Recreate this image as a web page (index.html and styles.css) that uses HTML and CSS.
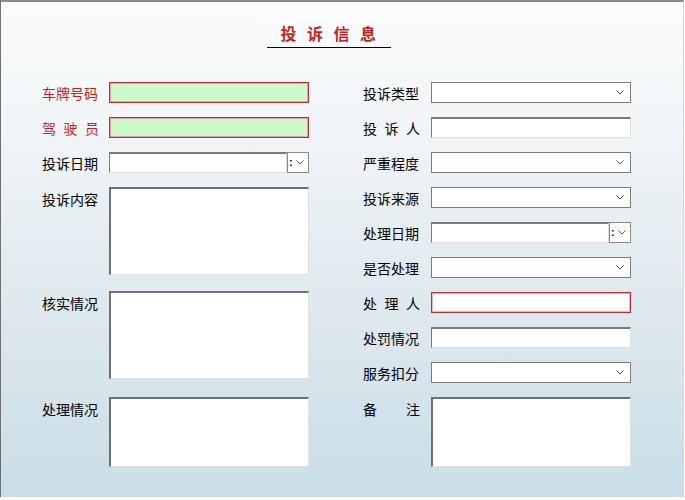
FILE: index.html
```html
<!DOCTYPE html>
<html lang="zh-CN">
<head>
<meta charset="utf-8">
<title>投诉信息</title>
<link rel="stylesheet" href="styles.css">
</head>
<body>
<div class="frame">
  <header class="head">
    <h1 class="title">投诉信息</h1>
  </header>
  <div class="form">
    <div class="col">
      <div class="row">
        <span class="lbl req">车牌号码</span>
        <div class="field req-field"></div>
      </div>
      <div class="row">
        <span class="lbl req just">驾 驶 员</span>
        <div class="field req-field"></div>
      </div>
      <div class="row">
        <span class="lbl">投诉日期</span>
        <div class="date">
          <div class="field sunken date-in"></div>
          <div class="date-btn"><span class="colon">:</span><svg class="chev" viewBox="0 0 8 5" width="8" height="5"><path d="M0.5 0.5 L4 4 L7.5 0.5" fill="none" stroke="#555" stroke-width="1"/></svg></div>
        </div>
      </div>
      <div class="row tall-1">
        <span class="lbl">投诉内容</span>
        <div class="area h88"></div>
      </div>
      <div class="row tall-2">
        <span class="lbl">核实情况</span>
        <div class="area h88"></div>
      </div>
      <div class="row tall-3">
        <span class="lbl">处理情况</span>
        <div class="area h70"></div>
      </div>
    </div>
    <div class="col col-right">
      <div class="row">
        <span class="lbl">投诉类型</span>
        <div class="field select"><svg class="chev" viewBox="0 0 8 5" width="8" height="5"><path d="M0.5 0.5 L4 4 L7.5 0.5" fill="none" stroke="#555" stroke-width="1"/></svg></div>
      </div>
      <div class="row">
        <span class="lbl just">投 诉 人</span>
        <div class="field sunken"></div>
      </div>
      <div class="row">
        <span class="lbl">严重程度</span>
        <div class="field select"><svg class="chev" viewBox="0 0 8 5" width="8" height="5"><path d="M0.5 0.5 L4 4 L7.5 0.5" fill="none" stroke="#555" stroke-width="1"/></svg></div>
      </div>
      <div class="row">
        <span class="lbl">投诉来源</span>
        <div class="field select"><svg class="chev" viewBox="0 0 8 5" width="8" height="5"><path d="M0.5 0.5 L4 4 L7.5 0.5" fill="none" stroke="#555" stroke-width="1"/></svg></div>
      </div>
      <div class="row">
        <span class="lbl">处理日期</span>
        <div class="date">
          <div class="field sunken date-in"></div>
          <div class="date-btn"><span class="colon">:</span><svg class="chev" viewBox="0 0 8 5" width="8" height="5"><path d="M0.5 0.5 L4 4 L7.5 0.5" fill="none" stroke="#555" stroke-width="1"/></svg></div>
        </div>
      </div>
      <div class="row">
        <span class="lbl">是否处理</span>
        <div class="field select"><svg class="chev" viewBox="0 0 8 5" width="8" height="5"><path d="M0.5 0.5 L4 4 L7.5 0.5" fill="none" stroke="#555" stroke-width="1"/></svg></div>
      </div>
      <div class="row">
        <span class="lbl just">处 理 人</span>
        <div class="field red-field"></div>
      </div>
      <div class="row">
        <span class="lbl">处罚情况</span>
        <div class="field sunken"></div>
      </div>
      <div class="row">
        <span class="lbl">服务扣分</span>
        <div class="field select"><svg class="chev" viewBox="0 0 8 5" width="8" height="5"><path d="M0.5 0.5 L4 4 L7.5 0.5" fill="none" stroke="#555" stroke-width="1"/></svg></div>
      </div>
      <div class="row tall-3">
        <span class="lbl just">备 注</span>
        <div class="area h70"></div>
      </div>
    </div>
  </div>
</div>
</body>
</html>
```

FILE: styles.css
```css
html, body {
  margin: 0;
  padding: 0;
  background: #ffffff;
}
body {
  font-family: "Noto Sans CJK SC", "Liberation Sans", sans-serif;
  font-size: 14px;
  color: #000;
}
.frame {
  box-sizing: border-box;
  width: 684px;
  height: 497px;
  border-top: 2px solid #8a8a8a;
  border-left: 1px solid #707070;
  border-right: 1px solid #d4d9dc;
  background: linear-gradient(to bottom, #fbfcfc 0%, #f1f5f7 25%, #e1ebf0 55%, #cadde6 100%);
}
.head {
  display: flex;
  justify-content: center;
  padding-top: 20px;
  padding-right: 27px;
}
.title {
  margin: 0;
  width: 124px;
  box-sizing: border-box;
  padding-left: 10px;
  font-size: 16px;
  font-weight: bold;
  color: #c81e1e;
  letter-spacing: 10.5px;
  line-height: 22px;
  text-align: center;
  border-bottom: 1px solid #000;
  padding-bottom: 3px;
}
.form {
  display: grid;
  grid-template-columns: 267px 300px;
  column-gap: 54px;
  padding-left: 41px;
  padding-top: 34px;
}
.col {
  display: flex;
  flex-direction: column;
  gap: 14px;
}
.row {
  display: flex;
  align-items: center;
  height: 21px;
  gap: 10px;
}
.col-right .row { gap: 11px; }
.row.tall-1 { height: 90px; align-items: flex-start; }
.row.tall-2 { height: 92px; align-items: flex-start; }
.row.tall-3 { height: 70px; align-items: flex-start; }
.row.tall-1 .lbl, .row.tall-2 .lbl, .row.tall-3 .lbl { padding-top: 2px; }
.lbl {
  width: 57px;
  flex: none;
  line-height: 20px;
  white-space: nowrap;
}
.lbl.just {
  text-align: justify;
  text-align-last: justify;
  white-space: normal;
}
.lbl.req { color: #d01c1c; }
.field {
  box-sizing: border-box;
  width: 200px;
  height: 21px;
  background: #fff;
  flex: none;
}
.select {
  border: 1px solid #7c7c7c;
  display: flex;
  align-items: center;
  justify-content: flex-end;
  padding-right: 6px;
}
.sunken {
  border-top: 2px solid #7a7a7a;
  border-left: 1px solid #7a7a7a;
  border-right: 1px solid #dedede;
  border-bottom: 1px solid #dedede;
}
.req-field {
  border: 1px solid #c42a2f;
  box-shadow: inset 0 0 0 1px #e9a0a0;
  background: #ccfacc;
}
.red-field {
  border: 1px solid #c42a2f;
  box-shadow: inset 0 0 0 1px #eeb0b0;
}
.date {
  display: flex;
  width: 200px;
  height: 21px;
}
.date-in {
  width: 178px;
}
.date-btn {
  box-sizing: border-box;
  width: 22px;
  height: 21px;
  border: 1px solid #8a8a8a;
  background: #fff;
  display: flex;
  align-items: center;
  padding-left: 1px;
  gap: 3px;
}
.colon {
  font-family: "Liberation Sans", sans-serif;
  font-size: 11px;
  font-weight: bold;
  line-height: 11px;
  color: #000;
}
.chev { display: block; flex: none; }
.area {
  box-sizing: border-box;
  width: 200px;
  background: #fff;
  border-top: 2px solid #707070;
  border-left: 2px solid #707070;
  border-right: 1px solid #e0e0e0;
  border-bottom: 1px solid #e0e0e0;
  flex: none;
}
.h88 { height: 88px; }
.h70 { height: 70px; }
```
